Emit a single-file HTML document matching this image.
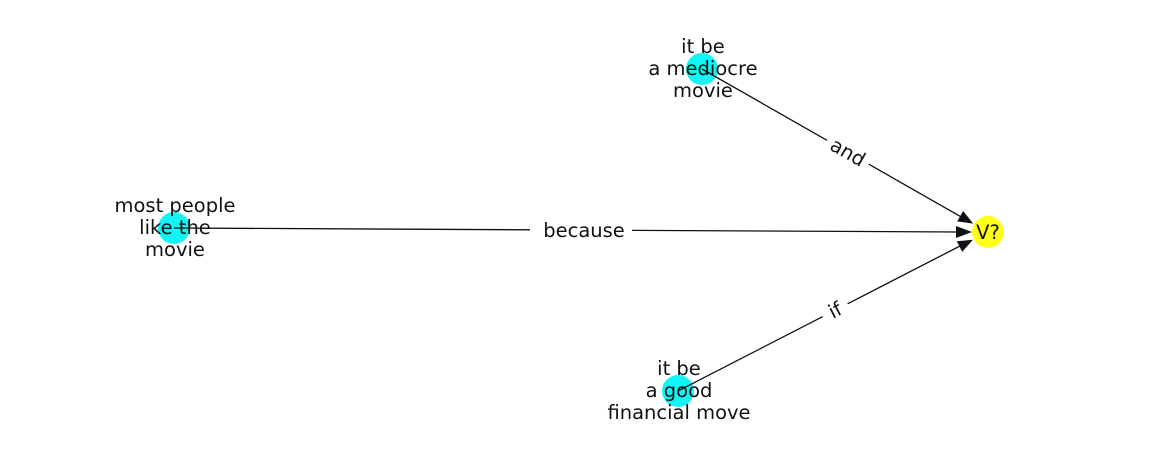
<!DOCTYPE html>
<html><head><meta charset="utf-8"><style>
html,body{margin:0;padding:0;background:#fff;}
svg{display:block;}
text{font-family:"DejaVu Sans","Liberation Sans",sans-serif;font-size:19.5px;fill:#111;}
</style></head><body>
<svg width="1162" height="462" viewBox="0 0 1162 462" xmlns="http://www.w3.org/2000/svg">
<circle cx="702" cy="69" r="16" fill="#11f5f5"/>
<circle cx="174" cy="228" r="16" fill="#11f5f5"/>
<circle cx="678" cy="391" r="16" fill="#11f5f5"/>
<circle cx="988" cy="232" r="16" fill="#ffff1a"/>
<g stroke="#111" stroke-width="1.3" fill="none">
<line x1="702" y1="69" x2="961" y2="216.8"/>
<line x1="174" y1="228" x2="958" y2="232"/>
<line x1="678" y1="391" x2="960" y2="246"/>
</g>
<g fill="#111">
<polygon points="973.2,223.6 957.2,221.4 963.2,211.0"/>
<polygon points="972,232 956,226 956,238"/>
<polygon points="972.9,239.8 962.2,251.9 956.8,241.3"/>
</g>
<rect x="530" y="218" width="102" height="24" fill="#fff"/>
<text x="584" y="237" text-anchor="middle">because</text>
<g transform="translate(848,152) rotate(29.7)">
<rect x="-24" y="-12" width="48" height="24" fill="#fff"/>
<text x="0" y="7" text-anchor="middle">and</text></g>
<g transform="translate(835,310) rotate(-27.2)">
<rect x="-14" y="-12" width="28" height="24" fill="#fff"/>
<text x="0" y="7" text-anchor="middle">if</text></g>
<text x="988" y="239" text-anchor="middle">V?</text>
<text text-anchor="middle"><tspan x="703" y="53">it be</tspan><tspan x="703" y="75">a mediocre</tspan><tspan x="703" y="97">movie</tspan></text>
<text text-anchor="middle"><tspan x="175" y="212">most people</tspan><tspan x="175" y="234">like the</tspan><tspan x="175" y="256">movie</tspan></text>
<text text-anchor="middle"><tspan x="679" y="375">it be</tspan><tspan x="679" y="397">a good</tspan><tspan x="679" y="419">financial move</tspan></text>
</svg>
</body></html>
